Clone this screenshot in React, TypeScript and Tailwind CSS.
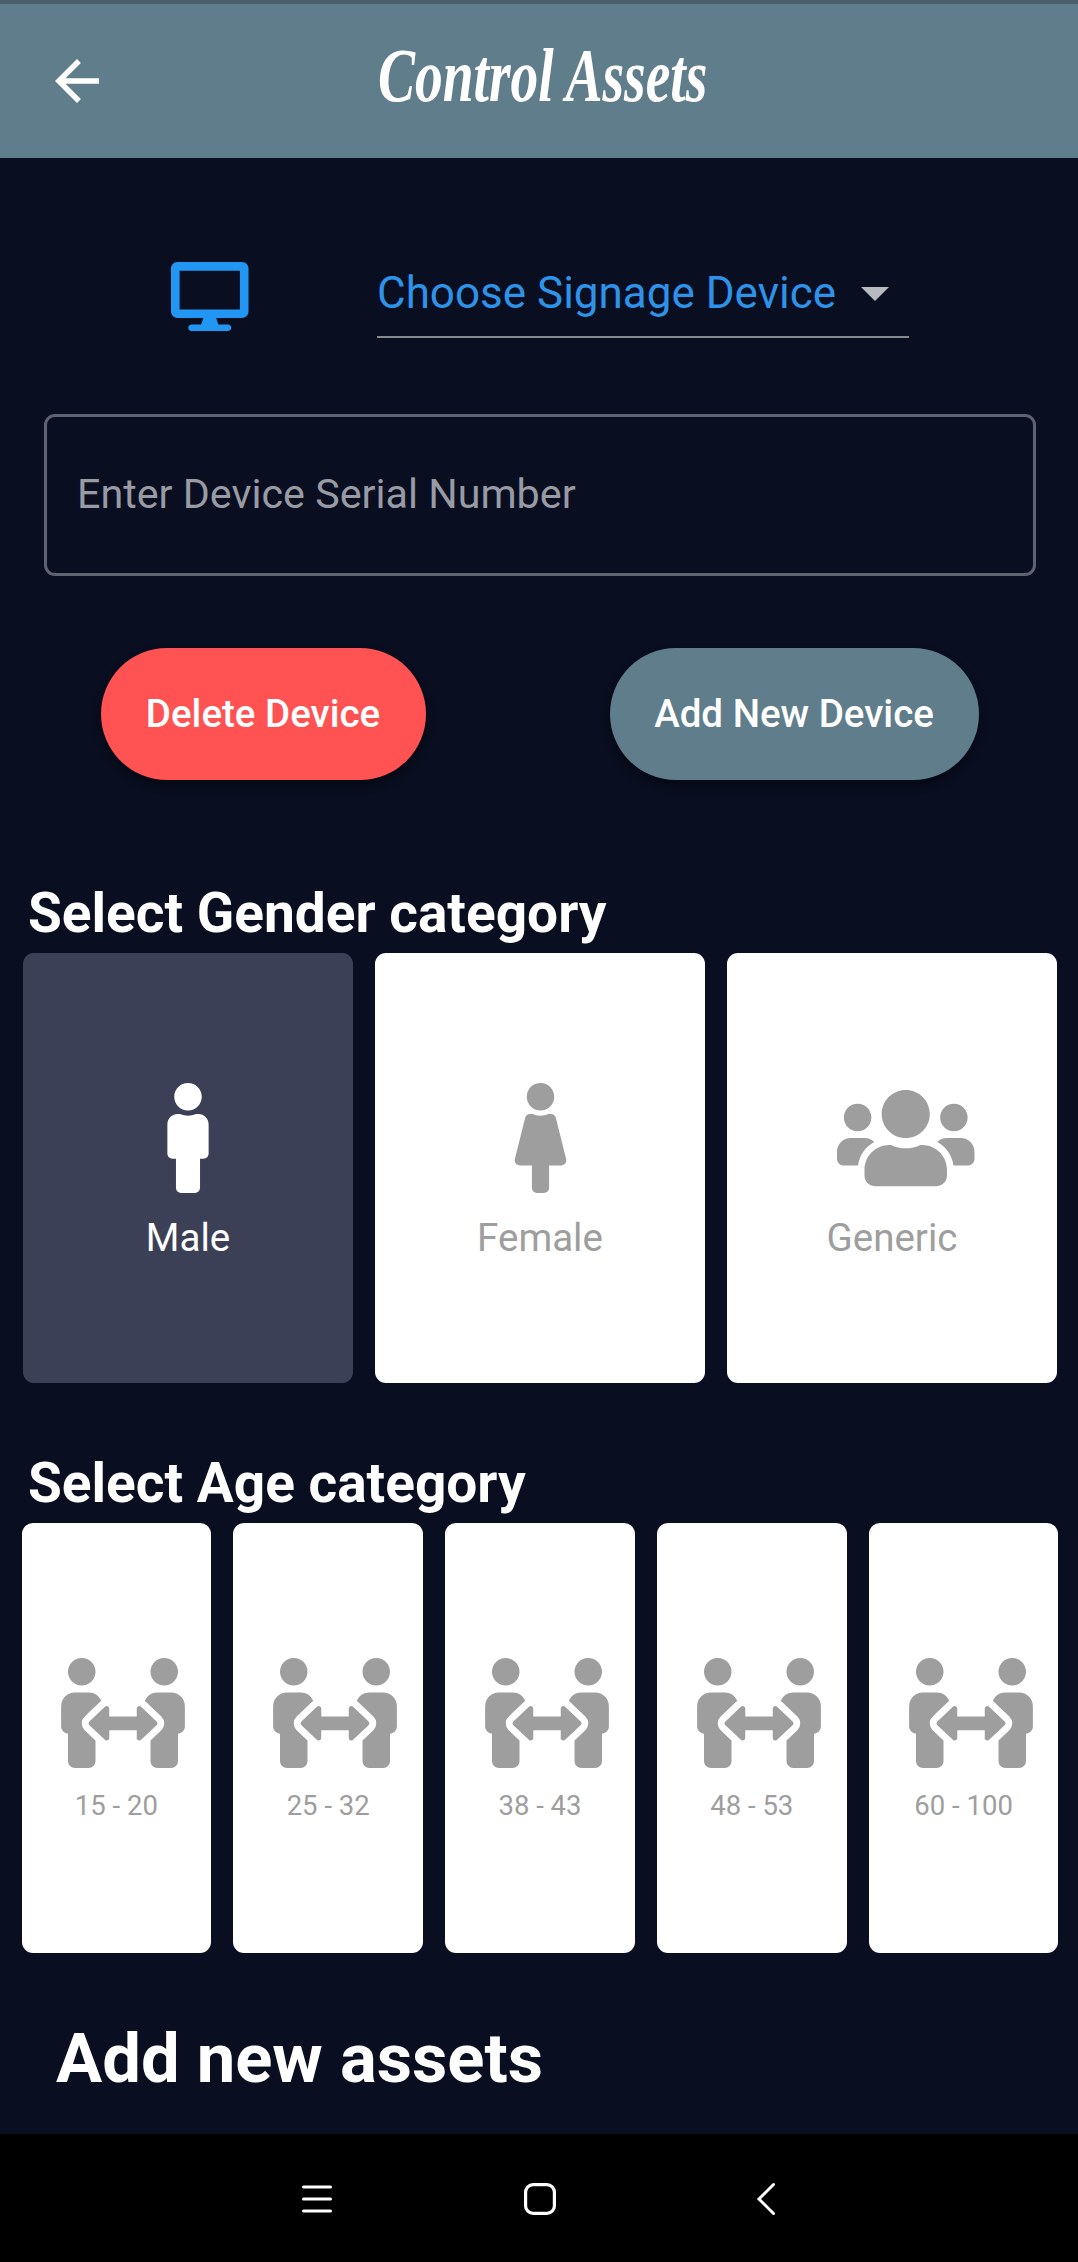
import React from "react";
import { MdArrowBack } from "react-icons/md";
import { FaDesktop, FaFemale, FaMale, FaPeopleArrows, FaUsers } from "react-icons/fa";

const ages = ["15 - 20", "25 - 32", "38 - 43", "48 - 53", "60 - 100"];

function Header() {
  return (
    <header className="relative flex h-[158px] items-start justify-center border-t-4 border-[#4b5f6a] bg-[#607d8b] text-white">
      <button aria-label="Back" className="absolute top-[44px] left-[44px]">
        <MdArrowBack className="size-[66px]" />
      </button>
      <h1 className="mt-[23px] ml-[7px] origin-center scale-x-[0.73] font-['Liberation_Serif',serif] text-[76px] leading-[96px] font-bold whitespace-nowrap italic">
        Control Assets
      </h1>
    </header>
  );
}

function GenderCard({ label, selected, children }: { label: string; selected?: boolean; children: React.ReactNode }) {
  return (
    <button
      className={
        selected
          ? "flex h-[430px] flex-1 flex-col items-center rounded-[11px] bg-[#3c4056] pt-[130px] text-white"
          : "flex h-[430px] flex-1 flex-col items-center rounded-[11px] bg-white pt-[130px] text-[#9e9e9e]"
      }
    >
      {children}
      <span className="mt-[22px] text-[38.5px] leading-[45px]">{label}</span>
    </button>
  );
}

function AgeCard({ label }: { label: string }) {
  return (
    <button className="flex h-[430px] flex-1 flex-col items-center rounded-[11px] bg-white pt-[135px] text-[#9e9e9e]">
      <span className="flex w-[110px]">
        <FaPeopleArrows className="h-[110px] w-[124px] shrink-0" />
      </span>
      <span className="mt-[22px] text-[27.5px] leading-[32px] whitespace-nowrap">{label}</span>
    </button>
  );
}

export default function App() {
  return (
    <div className="flex h-[2262px] w-[1078px] flex-col overflow-hidden bg-[#090e20] font-['Roboto',sans-serif] text-white">
      <Header />
      <main className="flex flex-1 flex-col">
        <div className="flex h-[256px] shrink-0 items-start">
          <FaDesktop className="mt-[104px] ml-[171px] h-[69px] w-[77.5px] text-[#2196f3]" />
          <button className="mt-[92px] ml-[128.5px] flex h-[88px] w-[532px] items-center justify-between border-b-2 border-[#85878f] pr-[20px] text-left">
            <span className="text-[44px] leading-[52px] whitespace-nowrap text-[#2e92e8]">Choose Signage Device</span>
            <svg className="mt-px h-[14px] w-[28px] fill-[#b9bac0]" viewBox="0 0 28 14">
              <path d="M0 0h28L14 14z" />
            </svg>
          </button>
        </div>

        <input
          placeholder="Enter Device Serial Number"
          className="mr-[42px] ml-[44px] h-[162px] shrink-0 rounded-[11px] border-3 border-[#5f6271] bg-transparent px-[30px] pb-[2px] text-[41.25px] placeholder:text-[#999ba4] placeholder:opacity-100"
        />

        <div className="mt-[71.5px] flex h-[132px] shrink-0 justify-between pr-[99px] pl-[101px] text-[38.5px] font-medium">
          <button className="w-[325px] rounded-full bg-[#ff5252] pr-[1px] whitespace-nowrap shadow-[0_5px_8px_rgba(0,0,0,0.4)]">
            Delete Device
          </button>
          <button className="w-[369px] rounded-full bg-[#607d8b] pr-[1px] whitespace-nowrap shadow-[0_5px_8px_rgba(0,0,0,0.4)]">
            Add New Device
          </button>
        </div>

        <h2 className="mt-[93px] ml-[28px] text-[55px] leading-[80px] font-bold">Select Gender category</h2>
        <div className="flex shrink-0 gap-[22px] pr-[21px] pl-[23px]">
          <GenderCard label="Male" selected>
            <FaMale className="h-[110px] w-[42px]" />
          </GenderCard>
          <GenderCard label="Female">
            <FaFemale className="h-[110px] w-[55px]" />
          </GenderCard>
          <GenderCard label="Generic">
            <span className="flex w-[110px]">
              <FaUsers className="h-[110px] w-[137.5px] shrink-0" />
            </span>
          </GenderCard>
        </div>

        <h2 className="mt-[60px] ml-[28px] text-[55px] leading-[80px] font-bold">Select Age category</h2>
        <div className="flex shrink-0 gap-[22px] pr-[19.5px] pl-[21.5px]">
          {ages.map((age) => (
            <AgeCard key={age} label={age} />
          ))}
        </div>

        <h2 className="mt-[66px] ml-[56px] text-[68.75px] leading-[80px] font-bold">Add new assets</h2>
      </main>

      <nav className="flex h-[128px] shrink-0 items-start bg-black pt-[47px]">
        <svg className="ml-[301px] h-[36px] w-[32px]" viewBox="0 0 32 36" fill="none" stroke="white" strokeWidth="3" strokeLinecap="round">
          <path d="M2.5 6h27M2.5 18h27M2.5 30h27" />
        </svg>
        <svg className="ml-[189px] h-[36px] w-[36px]" viewBox="0 0 36 36" fill="none" stroke="white" strokeWidth="3.2">
          <rect x="3.6" y="3.6" width="28.8" height="28.8" rx="7.5" />
        </svg>
        <svg className="ml-[197px] h-[36px] w-[24px]" viewBox="0 0 24 36" fill="none" stroke="white" strokeWidth="3" strokeLinecap="round">
          <path d="M18.5 3.5 4 18l14.5 14.5" />
        </svg>
      </nav>
    </div>
  );
}
